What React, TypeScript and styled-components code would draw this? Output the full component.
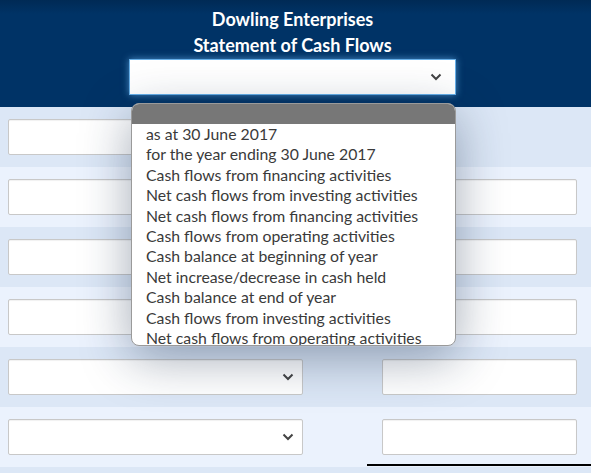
import React from "react";
import styled, { createGlobalStyle } from "styled-components";

const GlobalStyle = createGlobalStyle`
  html, body {
    margin: 0;
    padding: 0;
    background: #ffffff;
    font-family: Lato, "Open Sans", sans-serif;
  }
`;

const Page = styled.div`
  position: relative;
  width: 591px;
  height: 473px;
  overflow: hidden;
`;

const Header = styled.div`
  background: linear-gradient(to bottom, #002a55 0px, #003366 14px, #003366 100%);
  padding: 6px 6px 12px 0;
  display: flex;
  flex-direction: column;
  align-items: center;
`;

const Title = styled.div`
  color: #ffffff;
  font-weight: 700;
  font-size: 18px;
  line-height: 26px;
  text-align: center;
`;

const HeaderSelect = styled.div`
  box-sizing: border-box;
  margin-top: 1px;
  width: 327px;
  height: 36px;
  background: #ffffff;
  border: 1px solid #66afe9;
  box-shadow: 0 0 7px rgba(102, 175, 233, 0.7);
  display: flex;
  align-items: center;
  justify-content: flex-end;
  padding-right: 13px;
`;

const Row = styled.div<{ $dark: boolean }>`
  display: grid;
  grid-template-columns: 367px 224px;
  height: 60px;
  background: ${(p) => (p.$dark ? "#dce7f6" : "#ebf2fd")};
`;

const LeftCell = styled.div`
  padding: 12px 0 0 8px;
`;

const RightCell = styled.div<{ $total?: boolean }>`
  box-sizing: border-box;
  padding: 12px 14px 0 15px;
  border-bottom: ${(p) => (p.$total ? "2px solid #000" : "none")};
  height: ${(p) => (p.$total ? "59px" : "60px")};
`;

const SelectBox = styled.div`
  box-sizing: border-box;
  width: 295px;
  height: 36px;
  background: #ffffff;
  border: 1px solid #c8c8c8;
  border-radius: 2px;
  box-shadow: inset 0 1px 1px rgba(0, 0, 0, 0.06);
  display: flex;
  align-items: center;
  justify-content: flex-end;
  padding-right: 8px;
`;

const TextBox = styled.div`
  box-sizing: border-box;
  width: 195px;
  height: 36px;
  background: #ffffff;
  border: 1px solid #c8c8c8;
  border-radius: 2px;
  box-shadow: inset 0 1px 1px rgba(0, 0, 0, 0.06);
`;

const Popup = styled.div`
  position: absolute;
  left: 131px;
  top: 103px;
  width: 325px;
  height: 243px;
  box-sizing: border-box;
  background: #ffffff;
  border: 1px solid #9a9a9a;
  border-radius: 8px;
  overflow: hidden;
  box-shadow: 0 12px 50px rgba(20, 40, 70, 0.4);
  display: flex;
  flex-direction: column;
`;

const PopupBar = styled.div`
  height: 20px;
  background: #777777;
  flex-shrink: 0;
`;

const OptionList = styled.ul`
  list-style: none;
  margin: 0;
  padding: 0;
  overflow: hidden;
`;

const Option = styled.li`
  padding-left: 14px;
  font-size: 15.8px;
  line-height: 20.4px;
  color: #3a3a3a;
  white-space: nowrap;
`;

const Chevron = () => (
  <svg width="12" height="8" viewBox="0 0 12 8">
    <path d="M1.5 1.5 L6 6 L10.5 1.5" fill="none" stroke="#444" strokeWidth="2" />
  </svg>
);

const options = [
  "as at 30 June 2017",
  "for the year ending 30 June 2017",
  "Cash flows from financing activities",
  "Net cash flows from investing activities",
  "Net cash flows from financing activities",
  "Cash flows from operating activities",
  "Cash balance at beginning of year",
  "Net increase/decrease in cash held",
  "Cash balance at end of year",
  "Cash flows from investing activities",
  "Net cash flows from operating activities",
];

const rows = [
  { right: false },
  { right: true },
  { right: true },
  { right: true },
  { right: true },
  { right: true, total: true },
];

export default function App() {
  return (
    <>
      <GlobalStyle />
      <Page>
        <Header>
          <Title>Dowling Enterprises</Title>
          <Title>Statement of Cash Flows</Title>
          <HeaderSelect>
            <Chevron />
          </HeaderSelect>
        </Header>
        {rows.map((r, i) => (
          <Row key={i} $dark={i % 2 === 0}>
            <LeftCell>
              <SelectBox>
                <Chevron />
              </SelectBox>
            </LeftCell>
            <RightCell $total={r.total}>{r.right && <TextBox />}</RightCell>
          </Row>
        ))}
        <Row $dark={true} />
        <Popup>
          <PopupBar />
          <OptionList>
            {options.map((o) => (
              <Option key={o}>{o}</Option>
            ))}
          </OptionList>
        </Popup>
      </Page>
    </>
  );
}
